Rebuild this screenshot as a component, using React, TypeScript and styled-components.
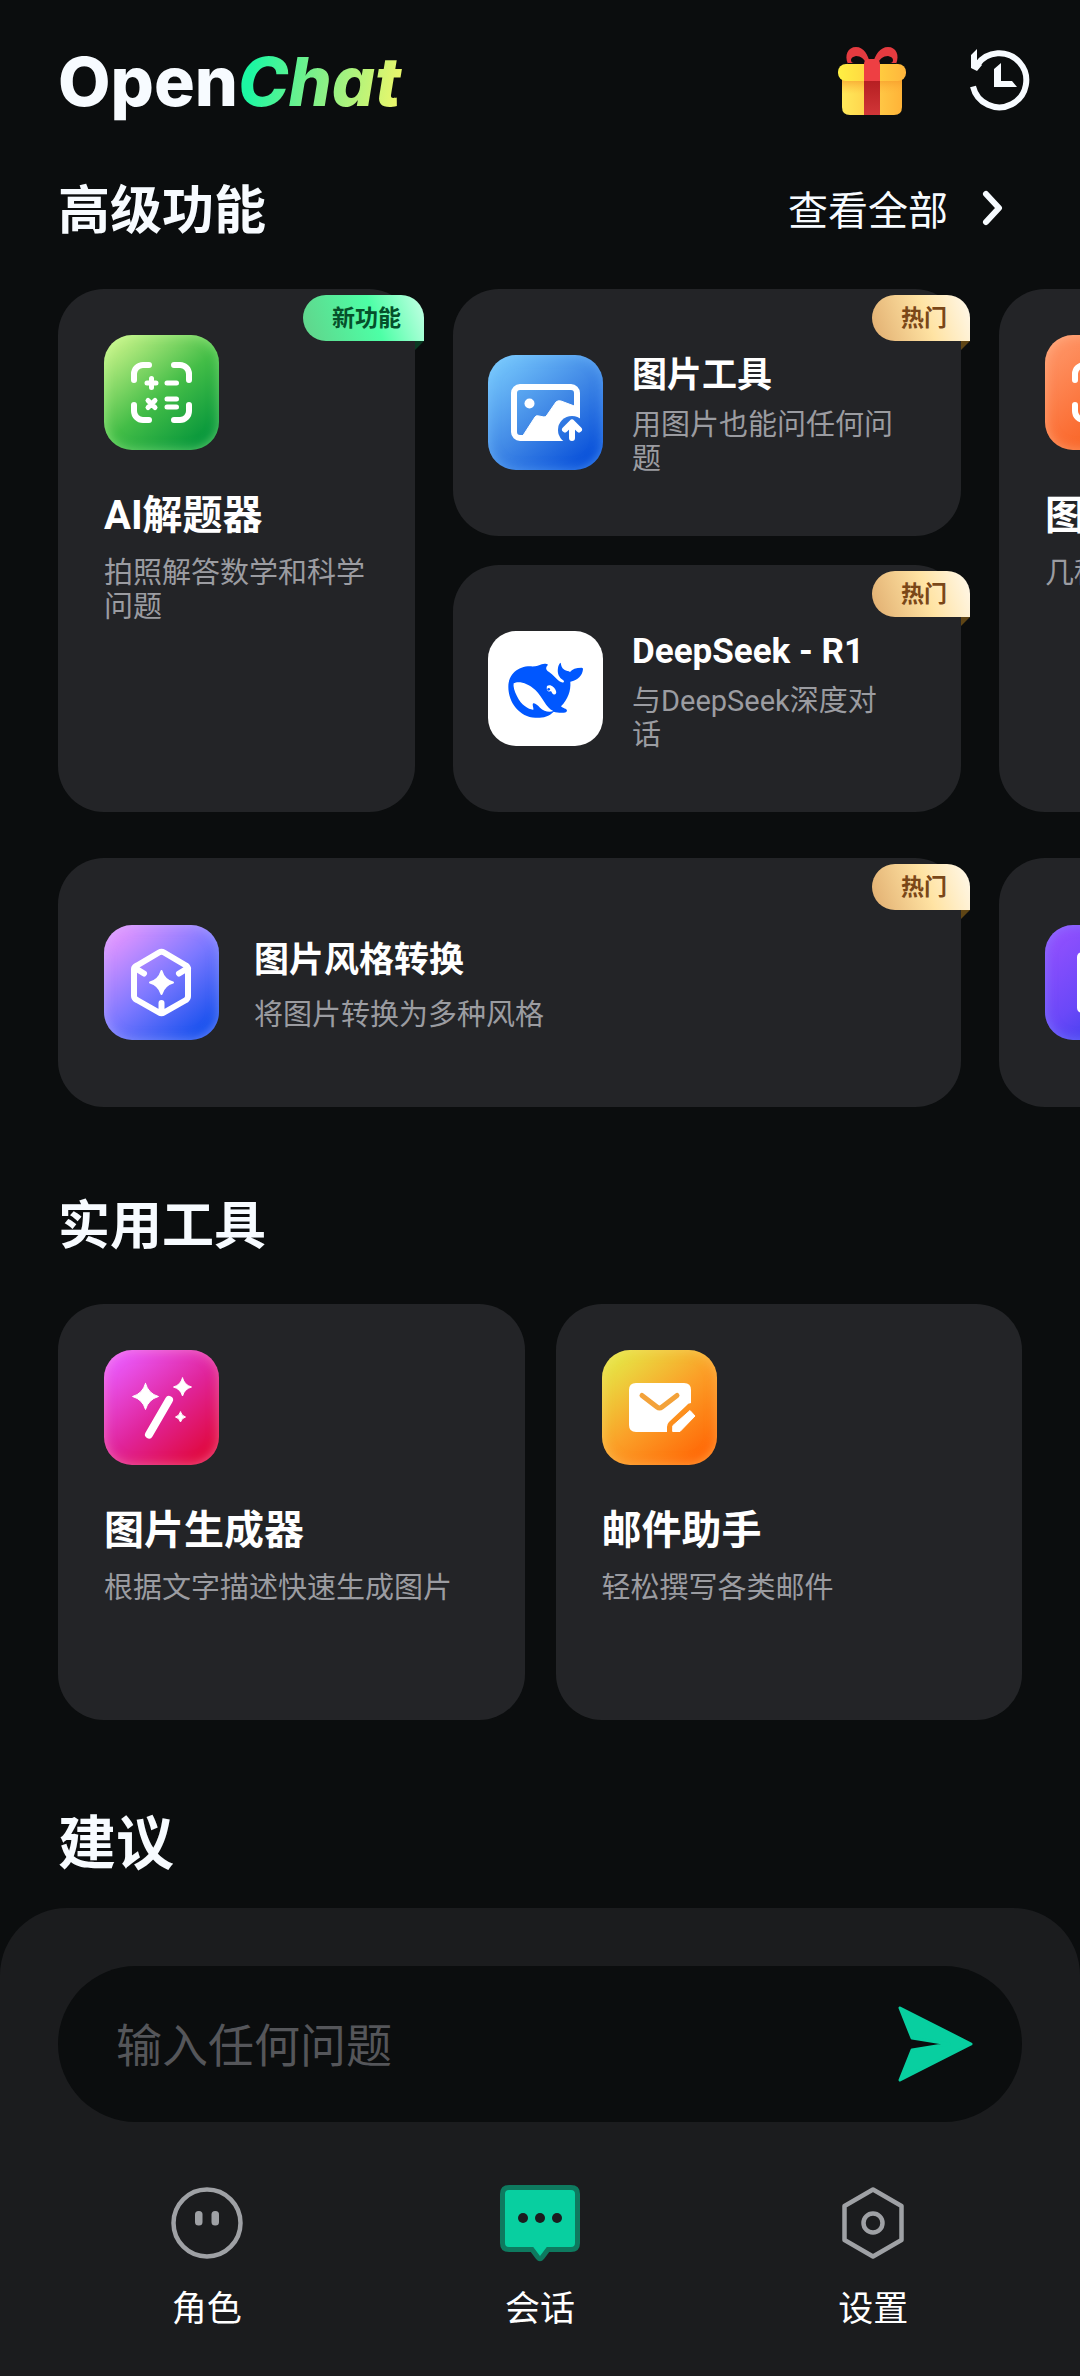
import { ReactNode } from "react";
import styled, { createGlobalStyle, css } from "styled-components";

const GlobalStyle=createGlobalStyle`
    * {
        box-sizing: border-box;
        margin: 0;
        padding: 0;
    }
    body {
        background-color: #0b0d0e;
        color: #f7fbff;
        font-family: Roboto, "Noto Sans CJK SC", sans-serif;
    }
    a {
        color: inherit;
        text-decoration: none;
    }
    button {
        border: none;
        background: none;
        color: inherit;
        font: inherit;
        cursor: pointer;
    }
    svg {
        display: block;
        flex-shrink: 0;
    }
`;

const Page=styled.div`
    min-height: 100vh;
    display: flex;
    flex-direction: column;
`;

const Header=styled.header`
    display: flex;
    justify-content: space-between;
    align-items: center;
    padding: 45px 45px 0 58px;
`;

const Logo=styled.h1`
    font-family: Inter, sans-serif;
    font-size: 68px;
    line-height: 72px;
    font-weight: 800;
`;

const LogoAccent=styled.span`
    font-style: italic;
    padding-right: 6px;
    background: linear-gradient(100deg, #1cf7a2 10%, #7cf08a 45%, #f0f76a 95%);
    background-clip: text;
    -webkit-background-clip: text;
    color: transparent;
`;

const HeaderActions=styled.div`
    display: flex;
    gap: 55px;
`;

const Main=styled.main`
    flex: 1;
    padding-bottom: 29px;
`;

const SectionHead=styled.div<{ $first?: boolean }>`
    display: flex;
    justify-content: space-between;
    align-items: center;
    margin-top: ${(props)=>props.$first ? "65px" : "90px"};
    padding: 0 58px;
`;

const SectionTitle=styled.h2<{ $large?: boolean }>`
    font-size: ${(props)=>props.$large ? "58px" : "52px"};
    line-height: ${(props)=>props.$large ? "68px" : "60px"};
    font-weight: 700;
`;

const MoreLink=styled.a`
    display: flex;
    align-items: center;
    gap: 14px;
    font-size: 40px;
    line-height: 60px;
`;

const Carousel=styled.div`
    display: grid;
    grid-template-columns: 357px 508px 357px 508px;
    gap: 46px 38px;
    margin-top: 47px;
    padding: 0 58px;
    overflow-x: auto;
    scrollbar-width: none;
`;

const Stack=styled.div`
    display: grid;
    grid-template-rows: 247px 247px;
    gap: 29px;
`;

const cardBase=css`
    position: relative;
    border-radius: 46px;
    background-color: #232427;
    color: white;
`;

const TallCard=styled.a<{ $minHeight: number }>`
    ${cardBase}
    display: block;
    min-height: ${(props)=>props.$minHeight}px;
    padding: 46px;
`;

const RowCard=styled.a<{ $wide?: boolean }>`
    ${cardBase}
    display: flex;
    align-items: center;
    gap: ${(props)=>props.$wide ? "35px" : "29px"};
    padding: ${(props)=>props.$wide ? "67px 46px" : "0 60px 0 35px"};
    ${(props)=>props.$wide && "grid-column: span 2;"}
`;

const RowText=styled.div`
    padding-top: 6px;
`;

const CardTitle=styled.h3<{ $row?: boolean }>`
    margin-top: ${(props)=>props.$row ? "0" : "42px"};
    font-size: ${(props)=>props.$row ? "35px" : "40px"};
    line-height: ${(props)=>props.$row ? "42px" : "48px"};
    font-weight: 700;
`;

const CardText=styled.p<{ $gap: number }>`
    margin-top: ${(props)=>props.$gap}px;
    color: #9b9ca1;
    font-size: 29px;
    line-height: 34px;
`;

const Tile=styled.span<{ $colors: string; $rim?: string }>`
    display: block;
    flex-shrink: 0;
    width: 115px;
    height: 115px;
    border-radius: 28px;
    background: linear-gradient(140deg, ${(props)=>props.$colors});
    box-shadow: inset 0 0 12px ${(props)=>props.$rim || "transparent"};
    overflow: hidden;
`;

const WhaleTile=styled(Tile)`
    display: flex;
    align-items: center;
    justify-content: center;
`;

const BadgeBox=styled.span<{ $hot?: boolean }>`
    position: absolute;
    top: 6px;
    right: -9px;
    padding: 2px 23px 0 29px;
    border-radius: 23px 23px 0 23px;
    background: ${(props)=>props.$hot
        ? "linear-gradient(70deg, #e3b274 5%, #ffe3a3 55%, #fff6e4 95%)"
        : "linear-gradient(70deg, #60d68c 5%, #4dffa6 58%, #b8ffde 95%)"};
    color: ${(props)=>props.$hot ? "#7a4718" : "#05502a"};
    font-size: 23px;
    line-height: 44px;
    font-weight: 700;
    /* folded corner below the ribbon */
    &::after {
        content: "";
        position: absolute;
        top: 100%;
        right: 0;
        border-top: 9px solid ${(props)=>props.$hot ? "#5f4515" : "#0a3a22"};
        border-right: 9px solid transparent;
    }
`;

const ToolGrid=styled.div`
    display: grid;
    grid-template-columns: 1fr 1fr;
    gap: 31px;
    margin-top: 47px;
    padding: 0 58px;
`;

const Sheet=styled.footer`
    padding: 58px 40px 45px;
    border-radius: 67px 67px 0 0;
    background-color: #1b1c1e;
`;

const AskForm=styled.form`
    display: flex;
    align-items: center;
    height: 156px;
    margin: 0 18px;
    padding: 0 46px 0 58px;
    border-radius: 78px;
    background-color: #0b0d0e;
`;

const AskInput=styled.input`
    flex: 1;
    min-width: 0;
    padding-top: 4px;
    border: none;
    outline: none;
    background: none;
    color: white;
    font-family: inherit;
    font-size: 46px;
    line-height: 60px;
    &::placeholder {
        color: #55565a;
        opacity: 1;
    }
`;

const Nav=styled.nav`
    display: grid;
    grid-template-columns: repeat(3, 1fr);
    margin-top: 61px;
`;

const NavItem=styled.a`
    display: flex;
    flex-direction: column;
    align-items: center;
    gap: 26px;
    color: white;
    font-size: 35px;
    line-height: 42px;
`;

const star=(x: number, y: number, r: number)=>{
    const k=r * 0.22;
    return `M${x} ${y - r}Q${x + k} ${y - k} ${x + r} ${y}Q${x + k} ${y + k} ${x} ${y + r}Q${x - k} ${y + k} ${x - r} ${y}Q${x - k} ${y - k} ${x} ${y - r}Z`;
};

function Glyph({ children }: { children: ReactNode }){
    return (
        <svg width="115" height="115" viewBox="0 0 115 115" fill="none" stroke="#fff" strokeLinecap="round" strokeLinejoin="round" aria-hidden="true">
            {children}
        </svg>
    );
}

function ScanFrame(){
    return <path strokeWidth="6" d="M30 45V39a9 9 0 0 1 9-9H45M70 30H76a9 9 0 0 1 9 9V45M85 70V76a9 9 0 0 1-9 9H70M45 85H39a9 9 0 0 1-9-9V70" />;
}

function MathIcon(){
    return (
        <Glyph>
            <ScanFrame />
            <path strokeWidth="5" d="M43 48H52M47.500 43.500V52.500M63 48H72.500M63 64H72.500M63 72H72.500M44 65.500L51 72.500M51 65.500L44 72.500" />
        </Glyph>
    );
}

function PictureIcon(){
    return (
        <Glyph>
            <mask id="uploadCut" maskUnits="userSpaceOnUse" x="0" y="0" width="115" height="115">
                <rect width="115" height="115" fill="#fff" stroke="none" />
                <path d="M84 75V120H120V75Z" fill="#000" stroke="none" />
                <circle cx="84" cy="75" r="14" fill="#000" stroke="none" />
            </mask>
            <g mask="url(#uploadCut)">
                <rect x="26" y="32" width="63" height="51" rx="6" strokeWidth="6" />
                <path d="M34 82L47 62Q48 60 51 61L56 62Q58 62 59 60L68 47Q70 45 73 46L89 52V83H34Z" fill="#fff" strokeWidth="1" />
            </g>
            <circle cx="41.500" cy="48.500" r="5" fill="#fff" stroke="none" />
            <path strokeWidth="6" d="M84 83V68M77 74.500L84 67.500L91 74.500" />
        </Glyph>
    );
}

function StyleIcon(){
    return (
        <Glyph>
            <path strokeWidth="6" d="M55 27.500Q57.500 26 60 27.500L82 40.500Q84 42 84 44V71Q84 73.500 82 75L60 87.500Q57.500 89 55 87.500L33 75Q30 73.500 30 71V44Q30 42 33 40.500ZM31 43L40 48.500M84 43L75 48.500M57.500 88V78" />
            <path d={star(57.5, 57.5, 11.5)} fill="#fff" strokeWidth="2" />
        </Glyph>
    );
}

function WandIcon(){
    return (
        <Glyph>
            <path d={star(41.5, 46.5, 13)} fill="#fff" strokeWidth="1" />
            <path d={star(78.5, 37, 9)} fill="#fff" strokeWidth="1" />
            <path d={star(76.5, 67, 5)} fill="#fff" strokeWidth="1" />
            <path strokeWidth="8" d="M65 50L45 84.500" />
        </Glyph>
    );
}

function MailIcon(){
    return (
        <Glyph>
            <path d="M34 33H82Q89 33 89 40V53Q86 53 84 56L67 72Q65 74 65 77V82H34Q27 82 27 75V40Q27 33 34 33Z" fill="#fff" stroke="none" />
            <path d="M40 45.500L55 57Q57.500 59 60 57L75 45.500" stroke="#f3a23a" strokeWidth="5" />
            <path d="M71 75.500L88 60.500L93 66L78 81.500H71Z" fill="#fff" strokeWidth="1" />
        </Glyph>
    );
}

function DocIcon(){
    return (
        <Glyph>
            <rect x="32" y="27" width="51" height="61" rx="5" fill="#fff" stroke="none" />
        </Glyph>
    );
}

function WhaleIcon(){
    return (
        <svg width="96" height="96" viewBox="0 0 288 288" aria-hidden="true">
            <path fill="#0057ff" d="M31 137C31 100 60 76 96 76C114 77 122 74 131 70C138 67 146 68 150 71C143 78 142 85 152 92C166 101 176 117 191 124C199 127 200 121 195 117C183 109 177 98 180 80C181 72 185 66 188 65C190 73 190 80 199 86C205 90 212 89 216 93C222 84 234 80 251 80Q256 80 255 85C253 104 240 118 217 122C219 150 210 174 189 196C195 203 206 202 207 209C206 218 180 216 167 212C152 228 132 231 112 230C65 228 31 185 31 137Z" />
            <path fill="#fff" d="M47 127C60 119 88 124 112 147C134 168 143 200 166 210C153 216 137 210 126 200C119 193 111 185 106 187C101 190 108 202 106 206C93 207 69 192 57 166C49 150 45 136 47 127Z" />
            <path fill="#fff" d="M147 135C157 129 170 138 174 150C177 159 170 163 165 159C160 155 162 149 156 151C150 154 144 146 147 135Z" />
            <circle cx="152" cy="145" r="4" fill="#0057ff" />
        </svg>
    );
}

function GiftIcon(){
    return (
        <svg width="72" height="72" viewBox="0 0 72 72" fill="none" aria-hidden="true">
            <defs>
                <linearGradient id="giftLid" x1="0" y1="0" x2="1" y2="0">
                    <stop offset="0" stopColor="#fff044" />
                    <stop offset="1" stopColor="#ffb53c" />
                </linearGradient>
                <linearGradient id="giftBox" x1="0" y1="0" x2="1" y2="0">
                    <stop offset="0" stopColor="#ffe95a" />
                    <stop offset="1" stopColor="#ffb338" />
                </linearGradient>
                <linearGradient id="giftShade" x1="0" y1="0" x2="0" y2="1">
                    <stop offset="0" stopColor="#f59a2a" stopOpacity="0.7" />
                    <stop offset="1" stopColor="#ffb53c" stopOpacity="0" />
                </linearGradient>
                <linearGradient id="giftBand" x1="0" y1="0" x2="0" y2="1">
                    <stop offset="0" stopColor="#b61f22" />
                    <stop offset="1" stopColor="#d13638" />
                </linearGradient>
            </defs>
            <path d="M12 19C8 10 12 2 20 2C28 2 32 10 34 18H12ZM15 15Q15 18 18 18H30C28 14 25 11 20 11Q15 12 15 15Z" fill="#e43b40" fillRule="evenodd" />
            <path d="M60 19C64 10 60 2 52 2C44 2 39 10 37 18H60ZM57 15Q57 18 54 18H42C44 14 47 11 52 11Q57 12 57 15Z" fill="#e43b40" fillRule="evenodd" />
            <path d="M6 32H66V62Q66 70 58 70H14Q6 70 6 62Z" fill="url(#giftBox)" />
            <rect x="6" y="35" width="60" height="14" fill="url(#giftShade)" />
            <rect x="2" y="19" width="68" height="17" rx="8" fill="url(#giftLid)" />
            <rect x="28" y="36" width="16" height="34" fill="url(#giftBand)" />
            <path d="M28 36V19Q28 14 34 14H38Q44 14 44 19V36Z" fill="#ee3f43" />
        </svg>
    );
}

function HistoryIcon(){
    return (
        <svg width="72" height="72" viewBox="0 0 72 72" fill="none" aria-hidden="true">
            <path d="M14 20A27 27 0 1 1 10 41.500" stroke="#f7fbff" strokeWidth="6" />
            <path d="M8 10L14 4V16L19 20L14 26L8 23Z" fill="#f7fbff" />
            <path d="M31 24L38 18V36H49L54 42H31Z" fill="#f7fbff" />
        </svg>
    );
}

function ChevronIcon(){
    return (
        <svg width="60" height="60" viewBox="0 0 60 60" fill="none" aria-hidden="true">
            <path d="M24 12L37 26L24 40" stroke="#f7fbff" strokeWidth="6" strokeLinecap="round" strokeLinejoin="round" />
        </svg>
    );
}

function SendIcon(){
    return (
        <svg width="80" height="80" viewBox="0 0 80 80" aria-hidden="true">
            <path d="M4 4L75 40L4 76L16 46L53 40L16 34Z" fill="#08cfa0" stroke="#08cfa0" strokeWidth="3" strokeLinejoin="round" />
        </svg>
    );
}

function FaceIcon(){
    return (
        <svg width="80" height="80" viewBox="0 0 80 80" fill="none" aria-hidden="true">
            <circle cx="40" cy="40" r="33.500" stroke="#9fa1a5" strokeWidth="4.500" />
            <rect x="28" y="28" width="7.500" height="14.500" rx="3.500" fill="#9fa1a5" />
            <rect x="44.500" y="28" width="7.500" height="14.500" rx="3.500" fill="#9fa1a5" />
        </svg>
    );
}

function ChatIcon(){
    return (
        <svg width="80" height="80" viewBox="0 0 80 80" aria-hidden="true">
            <path d="M9 4.500H71Q77.500 4.500 77.500 11V60Q77.500 66.500 71 66.500H48L42 74.500Q40 77 38 74.500L32 66.500H9Q2.500 66.500 2.500 60V11Q2.500 4.500 9 4.500Z" fill="#08cfa0" stroke="#0e7a5f" strokeWidth="5" />
            <circle cx="23" cy="35" r="5" fill="#1b1c1e" />
            <circle cx="40" cy="35" r="5" fill="#1b1c1e" />
            <circle cx="57" cy="35" r="5" fill="#1b1c1e" />
        </svg>
    );
}

function SettingsIcon(){
    return (
        <svg width="80" height="80" viewBox="0 0 80 80" fill="none" stroke="#9fa1a5" strokeWidth="4.500" strokeLinejoin="round" aria-hidden="true">
            <path d="M40 6.500L68.500 23V57L40 73.500L11.500 57V23Z" />
            <circle cx="40" cy="40" r="9.500" />
        </svg>
    );
}

function App(){
    return (
    <Page>
        <GlobalStyle />
        <Header>
            <Logo>Open<LogoAccent>Chat</LogoAccent></Logo>
            <HeaderActions>
                <button type="button" aria-label="礼物"><GiftIcon /></button>
                <button type="button" aria-label="历史记录"><HistoryIcon /></button>
            </HeaderActions>
        </Header>
        <Main>
            <SectionHead $first>
                <SectionTitle>高级功能</SectionTitle>
                <MoreLink href="#all">查看全部<ChevronIcon /></MoreLink>
            </SectionHead>
            <Carousel>
                <TallCard href="#solver" $minHeight={523}>
                    <Tile $colors="#dcfb92, #43bd47 52%, #08973c 88%" $rim="rgba(190, 255, 160, 0.5)"><MathIcon /></Tile>
                    <CardTitle>AI解题器</CardTitle>
                    <CardText $gap={16}>拍照解答数学和科学问题</CardText>
                    <BadgeBox>新功能</BadgeBox>
                </TallCard>
                <Stack>
                    <RowCard href="#image-tools">
                        <Tile $colors="#7dd0ff, #4189e6 50%, #0a52da 88%" $rim="rgba(130, 200, 255, 0.5)"><PictureIcon /></Tile>
                        <RowText>
                            <CardTitle $row>图片工具</CardTitle>
                            <CardText $gap={11}>用图片也能问任何问题</CardText>
                        </RowText>
                        <BadgeBox $hot>热门</BadgeBox>
                    </RowCard>
                    <RowCard href="#deepseek">
                        <WhaleTile $colors="#fff, #fff"><WhaleIcon /></WhaleTile>
                        <RowText>
                            <CardTitle $row>DeepSeek - R1</CardTitle>
                            <CardText $gap={11}>与DeepSeek深度对话</CardText>
                        </RowText>
                        <BadgeBox $hot>热门</BadgeBox>
                    </RowCard>
                </Stack>
                <TallCard href="#effects" $minHeight={523}>
                    <Tile $colors="#ff9c70, #fb6f35 55%, #f45a18 88%" $rim="rgba(255, 200, 160, 0.5)"><Glyph><ScanFrame /></Glyph></Tile>
                    <CardTitle>图片特效</CardTitle>
                    <CardText $gap={16}>几种图片特效</CardText>
                </TallCard>
                {/* second row: every card takes two columns */}
                <RowCard href="#style" $wide>
                    <Tile $colors="#fa9cff, #7c78ff 50%, #1a52ee 88%" $rim="rgba(190, 190, 255, 0.5)"><StyleIcon /></Tile>
                    <RowText>
                        <CardTitle $row>图片风格转换</CardTitle>
                        <CardText $gap={16}>将图片转换为多种风格</CardText>
                    </RowText>
                    <BadgeBox $hot>热门</BadgeBox>
                </RowCard>
                <RowCard href="#docs" $wide>
                    <Tile $colors="#9a52ff, #6a48f8 50%, #2c3ce8 88%" $rim="rgba(130, 140, 255, 0.6)"><DocIcon /></Tile>
                </RowCard>
            </Carousel>
            <SectionHead>
                <SectionTitle>实用工具</SectionTitle>
            </SectionHead>
            <ToolGrid>
                <TallCard href="#generate" $minHeight={416}>
                    <Tile $colors="#ea5cff 8%, #e0249a 52%, #e00a42 88%" $rim="rgba(255, 170, 200, 0.5)"><WandIcon /></Tile>
                    <CardTitle>图片生成器</CardTitle>
                    <CardText $gap={16}>根据文字描述快速生成图片</CardText>
                </TallCard>
                <TallCard href="#mail" $minHeight={416}>
                    <Tile $colors="#e4ec48 5%, #fba028 50%, #ff6a08 88%" $rim="rgba(255, 215, 120, 0.5)"><MailIcon /></Tile>
                    <CardTitle>邮件助手</CardTitle>
                    <CardText $gap={16}>轻松撰写各类邮件</CardText>
                </TallCard>
            </ToolGrid>
            <SectionHead>
                <SectionTitle $large>建议</SectionTitle>
            </SectionHead>
        </Main>
        <Sheet>
            <AskForm onSubmit={(event)=>event.preventDefault()}>
                <AskInput type="text" placeholder="输入任何问题" aria-label="输入任何问题" />
                <button type="submit" aria-label="发送"><SendIcon /></button>
            </AskForm>
            <Nav>
                <NavItem href="#roles"><FaceIcon />角色</NavItem>
                <NavItem href="#chat" aria-current="page"><ChatIcon />会话</NavItem>
                <NavItem href="#settings"><SettingsIcon />设置</NavItem>
            </Nav>
        </Sheet>
    </Page>
    );
}

export default App;
